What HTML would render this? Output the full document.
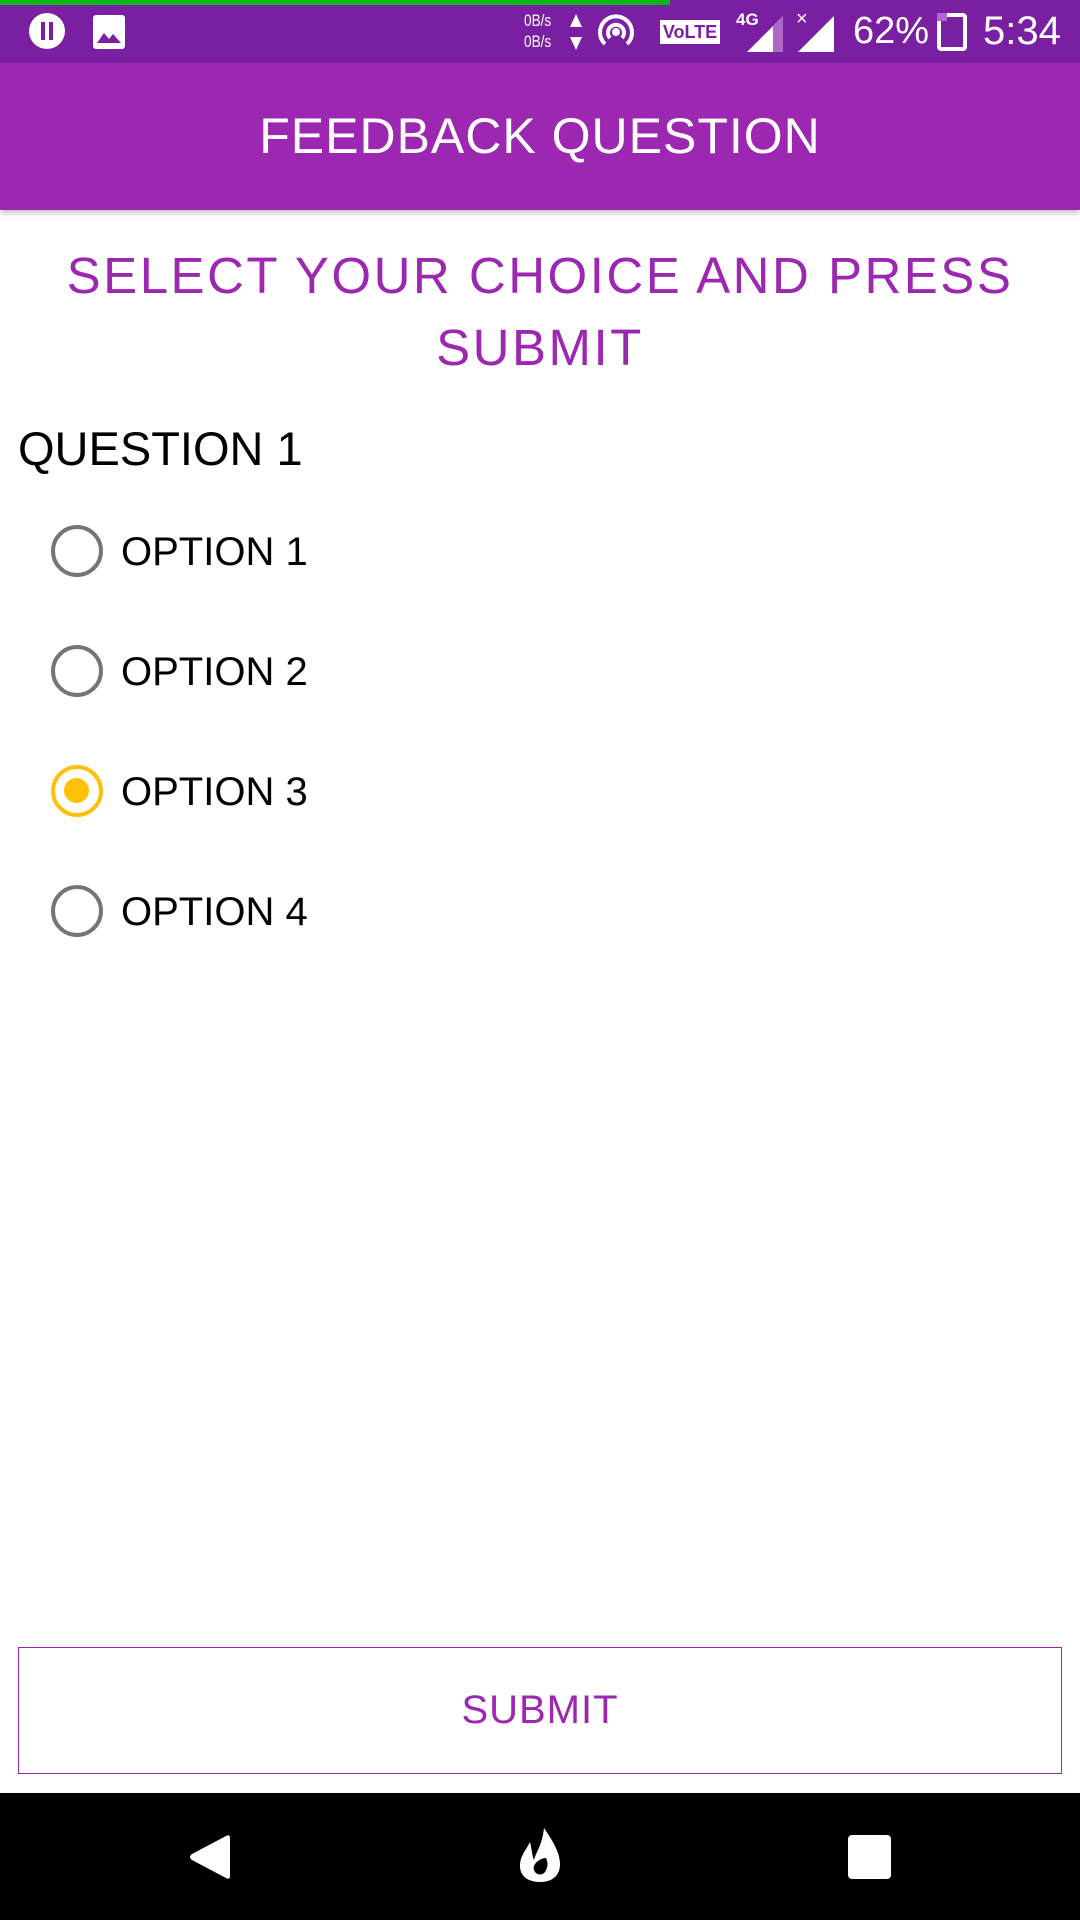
<!DOCTYPE html>
<html><head><meta charset="utf-8"><style>
*{margin:0;padding:0;box-sizing:border-box}
body{width:1080px;height:1920px;position:relative;background:#fff;font-family:"Liberation Sans",sans-serif;overflow:hidden}
.abs{position:absolute}
#sb{left:0;top:0;width:1080px;height:63px;background:#7B1FA2}
#prog{left:0;top:0;width:670px;height:5px;background:#0ab51a}
#ab{left:0;top:63px;width:1080px;height:147px;background:#9C27B0;box-shadow:0 3px 6px rgba(0,0,0,.25)}
#ab div{width:100%;text-align:center;color:#fff;font-size:50px;line-height:147px;letter-spacing:1px}
.head{width:100%;text-align:center;color:#9C27B0;font-size:51px;letter-spacing:2.5px}
.q{left:18px;top:421px;font-size:47px;color:#000;letter-spacing:0}
.opt{left:121px;font-size:40px;color:#000;letter-spacing:0}
.rad{left:51px;width:52px;height:52px;border-radius:50%;border:4.5px solid #757575}
.rad.sel{border-color:#FFC107}
.rad.sel::after{content:"";position:absolute;left:9px;top:9px;width:25px;height:25px;border-radius:50%;background:#FFC107}
#btn{left:18px;top:1647px;width:1044px;height:127px;border:1.5px solid #9C27B0;text-align:center;line-height:124px;color:#9C27B0;font-size:40px;letter-spacing:1px}
#nav{left:0;top:1793px;width:1080px;height:127px;background:#000}
.st{color:#fff}
</style></head><body>
<div id="sb" class="abs"></div>
<div id="prog" class="abs"></div>
<svg class="abs" style="left:28px;top:12px" width="110" height="40" viewBox="0 0 110 40">
<circle cx="19" cy="19" r="18" fill="#fff"/>
<rect x="13" y="10" width="4" height="18" fill="#7B1FA2"/><rect x="21" y="10" width="4" height="18" fill="#7B1FA2"/>
<rect x="65" y="3" width="32" height="34" rx="3" fill="#fff"/>
<path d="M69 31 L76 21 L81 27 L85 22 L93 31 Z" fill="#7B1FA2"/>
</svg>
<div class="abs st" style="left:524px;top:10px;font-size:17px;line-height:21px;transform:scaleX(0.8);transform-origin:left">0B/s<br>0B/s</div>
<svg class="abs" style="left:568px;top:12px" width="16" height="40"><path d="M8 2 L14 15 L2 15Z M8 38 L14 25 L2 25Z" fill="#fff"/></svg>
<svg class="abs" style="left:595px;top:11px" width="42" height="42" viewBox="0 0 42 42" fill="none" stroke="#fff" stroke-width="4"><path d="M10 33 A16 16 0 1 1 32 33"/><path d="M15 27 A8 8 0 1 1 27 27"/><circle cx="21" cy="21" r="2" fill="#fff"/></svg>
<div class="abs" style="left:660px;top:20px;width:60px;height:24px;background:#fff;color:#7B1FA2;font-size:18px;font-weight:bold;text-align:center;line-height:24px">VoLTE</div>
<div class="abs st" style="left:736px;top:10px;font-size:17px;font-weight:bold">4G</div>
<svg class="abs" style="left:745px;top:14px" width="40" height="40"><path d="M2 38 L38 2 L38 38Z" fill="#fff"/><path d="M28 12 L38 2 L38 38 L28 38Z" fill="#B068C8"/></svg>
<div class="abs st" style="left:796px;top:8px;font-size:20px">×</div>
<svg class="abs" style="left:796px;top:14px" width="40" height="40"><path d="M2 38 L38 2 L38 38Z" fill="#fff"/></svg>
<div class="abs st" style="left:853px;top:10px;font-size:38px">62%</div>
<svg class="abs" style="left:936px;top:12px" width="40" height="40"><rect x="3" y="3" width="26" height="34" rx="2" fill="none" stroke="#fff" stroke-width="4"/><rect x="1" y="1" width="10" height="8" fill="#B068C8"/></svg>
<div class="abs st" style="left:983px;top:9px;font-size:40px">5:34</div>

<div id="ab" class="abs"><div>FEEDBACK QUESTION</div></div>

<div class="abs head" style="top:246px">SELECT YOUR CHOICE AND PRESS</div>
<div class="abs head" style="top:318px">SUBMIT</div>
<div class="abs q">QUESTION 1</div>

<div class="abs rad" style="top:525px"></div><div class="abs opt" style="top:530px">OPTION 1</div>
<div class="abs rad" style="top:645px"></div><div class="abs opt" style="top:650px">OPTION 2</div>
<div class="abs rad sel" style="top:765px"></div><div class="abs opt" style="top:770px">OPTION 3</div>
<div class="abs rad" style="top:885px"></div><div class="abs opt" style="top:890px">OPTION 4</div>

<div id="btn" class="abs">SUBMIT</div>
<div id="nav" class="abs"></div>
<svg class="abs" style="left:188px;top:1834px" width="44" height="46"><path d="M42 4 Q42 0 38 2 L4 20 Q0 23 4 26 L38 44 Q42 46 42 42Z" fill="#fff"/></svg>
<svg class="abs" style="left:518px;top:1826px" width="44" height="58" viewBox="0 0 44 58"><path d="M26 2 C34 14 42 26 42 38 C42 50 34 56 22 56 C10 56 2 50 2 40 C2 30 8 24 12 16 C14 24 14 30 16 34 C18 26 24 20 26 2Z M28 32 C22 32 14 38 16 44 C18 50 26 50 28 44 C30 40 30 36 28 32Z" fill="#fff" fill-rule="evenodd"/></svg>
<div class="abs" style="left:848px;top:1835px;width:43px;height:44px;background:#fff;border-radius:4px"></div>
</body></html>
